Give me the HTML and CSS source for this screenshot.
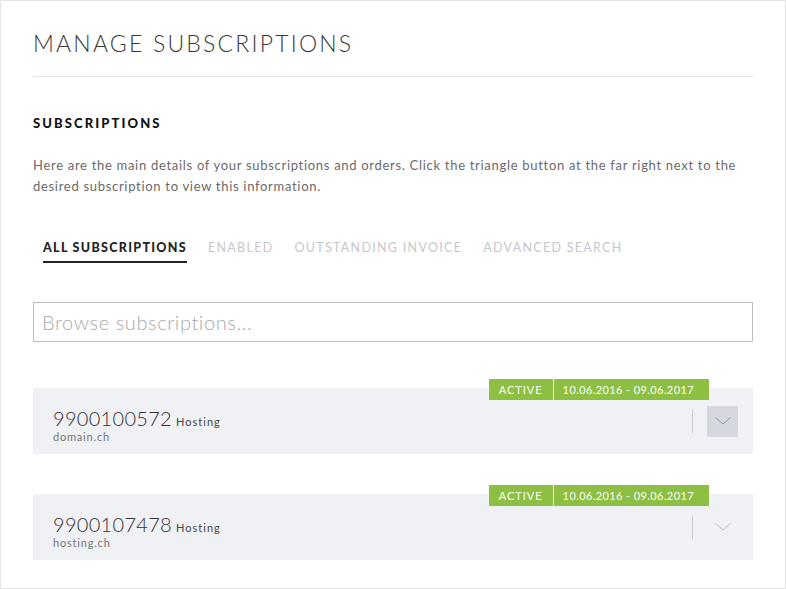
FILE: index.html
```html
<!DOCTYPE html>
<html>
<head>
	<title>Manage subscriptions</title>
	<link rel="stylesheet" href="styles.css">
</head>
<body>
	<div id='page'>
		<h1 class='title'>MANAGE SUBSCRIPTIONS</h1>

		<h2 class='section'>SUBSCRIPTIONS</h2>
		<p class='intro'>Here are the main details of your subscriptions and orders. Click the triangle button at the far right next to the desired subscription to view this information.</p>

		<div class='tabs'>
			<div class='tab active'>ALL SUBSCRIPTIONS</div>
			<div class='tab'>ENABLED</div>
			<div class='tab'>OUTSTANDING INVOICE</div>
			<div class='tab'>ADVANCED SEARCH</div>
		</div>

		<input class='search' type='text' placeholder='Browse subscriptions...'>

		<div class='sub'>
			<div class='badges'>
				<span class='badge'>ACTIVE</span>
				<span class='badge date'>10.06.2016 - 09.06.2017</span>
			</div>
			<div class='sub-info'>
				<div class='sub-line'><span class='sub-num'>9900100572</span> <span class='sub-type'>Hosting</span></div>
				<div class='sub-domain'>domain.ch</div>
			</div>
			<div class='sep'></div>
			<div class='toggle hover'>
				<svg width='16' height='10' viewBox='0 0 16 10'><path d='M0.5 1.5 L8 8 L15.5 1.5' fill='none' stroke='#8a8d96' stroke-width='0.9'/></svg>
			</div>
		</div>

		<div class='sub'>
			<div class='badges'>
				<span class='badge'>ACTIVE</span>
				<span class='badge date'>10.06.2016 - 09.06.2017</span>
			</div>
			<div class='sub-info'>
				<div class='sub-line'><span class='sub-num'>9900107478</span> <span class='sub-type'>Hosting</span></div>
				<div class='sub-domain'>hosting.ch</div>
			</div>
			<div class='sep'></div>
			<div class='toggle'>
				<svg width='16' height='10' viewBox='0 0 16 10'><path d='M0.5 1.5 L8 8 L15.5 1.5' fill='none' stroke='#b4b7bf' stroke-width='0.9'/></svg>
			</div>
		</div>
	</div>
</body>
</html>
```

FILE: styles.css
```css
body{
	margin:0;
	background-color:white;
	font-family: Lato, "Open Sans", sans-serif;
	color:#333;
}
#page{
	border:1px solid #e4e4e4;
	height:587px;
	padding:0 32px;
	overflow:hidden;
}
.title{
	margin:0;
	padding:29px 0 20px 0;
	font-weight:300;
	font-size:23px;
	line-height:26px;
	letter-spacing:2.2px;
	color:#3a3a3a;
	border-bottom:1px solid #e3e3e3;
}
.section{
	margin:38px 0 0 0;
	font-size:13px;
	line-height:16px;
	font-weight:900;
	letter-spacing:2.1px;
	color:#111;
}
.intro{
	margin:24px 0 0 0;
	font-size:13px;
	line-height:21px;
	color:#6a6a6a;
	letter-spacing:0.7px;
}
.tabs{
	display:flex;
	gap:21px;
	margin:43px 0 0 10px;
}
.tab{
	font-size:12.5px;
	line-height:16px;
	letter-spacing:1.3px;
	color:#c6c7cc;
	padding-bottom:5px;
}
.tab.active{
	color:#222;
	font-weight:900;
	letter-spacing:1.3px;
	border-bottom:2px solid #222;
}
.search{
	display:block;
	box-sizing:border-box;
	width:100%;
	height:40px;
	margin-top:39px;
	border:1px solid #bdbdbd;
	padding:0 8px;
	font-family: Lato, sans-serif;
	font-size:20px;
	font-weight:300;
	letter-spacing:0.6px;
	outline:none;
}
.search::placeholder{
	color:#a9a9a9;
}
.sub{
	position:relative;
	display:flex;
	align-items:center;
	height:66px;
	margin-top:46px;
	background-color:#f0f1f4;
	padding:0 15px 0 20px;
}
.sub + .sub{
	margin-top:40px;
}
.badges{
	position:absolute;
	top:-9px;
	right:44px;
	display:flex;
	gap:1px;
}
.badge{
	background-color:#8dbf43;
	color:white;
	font-size:11px;
	line-height:21px;
	letter-spacing:1px;
	padding:0 10px;
}
.badge.date{
	letter-spacing:0.4px;
	padding:0 15px 0 9px;
}
.sub-info{
	flex:1;
	padding-top:7px;
}
.sub-num{
	font-size:20px;
	font-weight:300;
	letter-spacing:0.3px;
	color:#333;
}
.sub-type{
	font-size:11px;
	letter-spacing:1px;
	color:#444;
}
.sub-domain{
	font-size:11px;
	letter-spacing:0.8px;
	color:#777;
	margin-top:0;
}
.sep{
	width:1px;
	height:23px;
	background-color:#c9cbd1;
	margin-right:14px;
}
.toggle{
	width:31px;
	height:31px;
	display:flex;
	align-items:center;
	justify-content:center;
}
.toggle.hover{
	background-color:#d6d8e0;
}
```
